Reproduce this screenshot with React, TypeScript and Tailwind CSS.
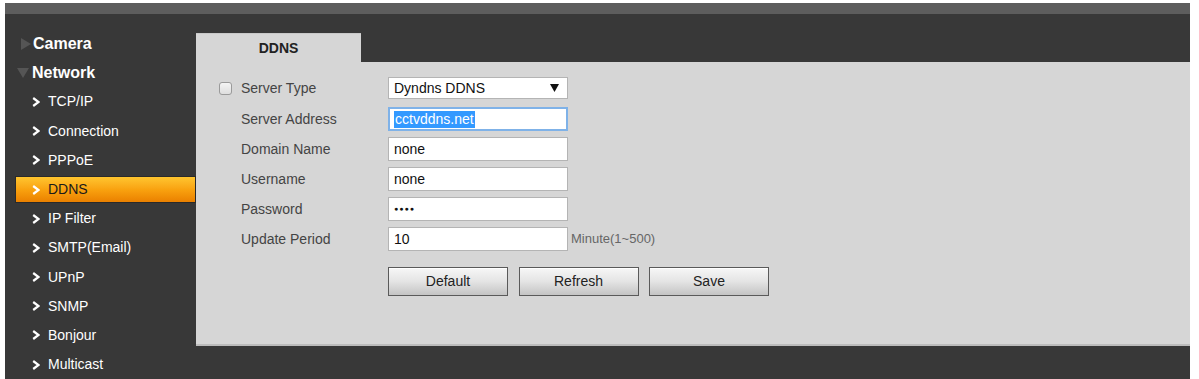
import React from "react";

const subItems = [
  "TCP/IP",
  "Connection",
  "PPPoE",
  "DDNS",
  "IP Filter",
  "SMTP(Email)",
  "UPnP",
  "SNMP",
  "Bonjour",
  "Multicast",
];

function Chevron({ color = "#ffffff" }: { color?: string }) {
  return (
    <svg width="8" height="10" viewBox="0 0 8 10" className="shrink-0">
      <polyline points="1.2,1 6.5,5 1.2,9" fill="none" stroke={color} strokeWidth="2.2" />
    </svg>
  );
}

function Field({ value, focused }: { value: React.ReactNode; focused?: boolean }) {
  return (
    <div
      className={
        focused
          ? "w-[180px] h-[24px] bg-white border-2 border-[#7fb2e8] flex items-center pl-[4px] text-[14px] text-[#111]"
          : "w-[180px] h-[24px] bg-white border border-[#b4b4b4] flex items-center pl-[5px] text-[14px] text-[#111]"
      }
    >
      {value}
    </div>
  );
}

function Btn({ label }: { label: string }) {
  return (
    <div className="w-[120px] h-[29px] border border-[#5a5a5a] bg-gradient-to-b from-[#f7f7f7] via-[#e4e4e4] to-[#c4c4c4] flex items-center justify-center text-[14px] text-[#222] shadow-[inset_0_1px_0_#ffffff]">
      {label}
    </div>
  );
}

export default function App() {
  const labels = ["Server Address", "Domain Name", "Username", "Password", "Update Period"];
  return (
    <div
      className="w-[1199px] h-[379px] bg-white pt-[3px] pl-[5px] pr-[9px] overflow-hidden"
      style={{ fontFamily: '"Liberation Sans", Arial, sans-serif' }}
    >
      <div className="h-[11px] bg-[#5d5d5d]" />
      <div className="h-[365px] bg-[#383838] flex">
        {/* Sidebar */}
        <div className="w-[191px] pt-[15px] shrink-0">
          <div className="h-[29.2px] flex items-center">
            <svg width="12" height="12" viewBox="0 0 12 12" className="ml-[14px] mr-[1px]">
              <polygon points="2,0 12,6 2,12" fill="#555555" />
            </svg>
            <span className="ml-[1px] text-[16px] font-bold text-white">Camera</span>
          </div>
          <div className="h-[29.2px] flex items-center">
            <svg width="13" height="12" viewBox="0 0 13 12" className="ml-[12px] mr-[1px]">
              <polygon points="0,1 12,1 6,11" fill="#555555" />
            </svg>
            <span className="ml-[1px] text-[16px] font-bold text-white">Network</span>
          </div>
          {subItems.map((s) =>
            s === "DDNS" ? (
              <div key={s} className="h-[29.2px] flex items-center">
                <div className="ml-[10px] w-[181px] h-[27px] border border-[#2a2a2a] bg-gradient-to-b from-[#ffc52e] via-[#f9a20f] to-[#ea8000] flex items-center pl-[16px] gap-[8px]">
                  <Chevron />
                  <span className="text-[14px] text-[#1a1a1a]">DDNS</span>
                </div>
              </div>
            ) : (
              <div key={s} className="h-[29.2px] flex items-center pl-[27px] gap-[8px]">
                <Chevron />
                <span className="text-[14px] text-white">{s}</span>
              </div>
            )
          )}
        </div>

        {/* Main */}
        <div className="flex-1 flex flex-col">
          <div className="h-[19px]" />
          <div className="w-[165px] h-[29px] bg-[#d6d6d6] border-t border-[#c8c8c8] flex items-center justify-center text-[14px] font-bold text-[#222]">
            DDNS
          </div>
          <div className="h-[284px] bg-[#d6d6d6] border-b-2 border-[#bcbcbc] pt-[15px] pl-[23px]">
            <div className="flex">
              <div className="w-[169px] shrink-0 flex flex-col">
                <div className="h-[22px] flex items-center pt-[1px]">
                  <div className="w-[13px] h-[13px] rounded-[3px] border border-[#9a9a9a] bg-gradient-to-b from-[#f4f4f4] to-[#dedede]" />
                  <span className="ml-[9px] text-[14px] text-[#444]">Server Type</span>
                </div>
                <div className="flex flex-col gap-[6px] mt-[8px]">
                  {labels.map((l) => (
                    <div key={l} className="h-[24px] flex items-center pl-[22px] pt-[1px] text-[14px] text-[#444]">
                      {l}
                    </div>
                  ))}
                </div>
              </div>
              <div className="flex flex-col">
                <div className="w-[180px] h-[22px] bg-white border border-[#b4b4b4] flex items-center justify-between pl-[5px] pr-[8px] text-[14px] text-[#111]">
                  <span>Dyndns DDNS</span>
                  <svg width="9" height="8" viewBox="0 0 9 8">
                    <polygon points="0,0 9,0 4.5,8" fill="#111" />
                  </svg>
                </div>
                <div className="flex flex-col gap-[6px] mt-[8px]">
                  <Field
                    focused
                    value={<span className="bg-[#3399ff] text-white leading-[17px] px-[1px]">cctvddns.net</span>}
                  />
                  <Field value="none" />
                  <Field value="none" />
                  <Field value={<span className="text-[7px] tracking-[1px] font-bold">●●●●</span>} />
                  <div className="flex items-center">
                    <Field value="10" />
                    <span className="ml-[3px] text-[13px] text-[#666]">Minute(1~500)</span>
                  </div>
                </div>
                <div className="flex gap-[10.5px] mt-[16px]">
                  <Btn label="Default" />
                  <Btn label="Refresh" />
                  <Btn label="Save" />
                </div>
              </div>
            </div>
          </div>
        </div>
      </div>
    </div>
  );
}
